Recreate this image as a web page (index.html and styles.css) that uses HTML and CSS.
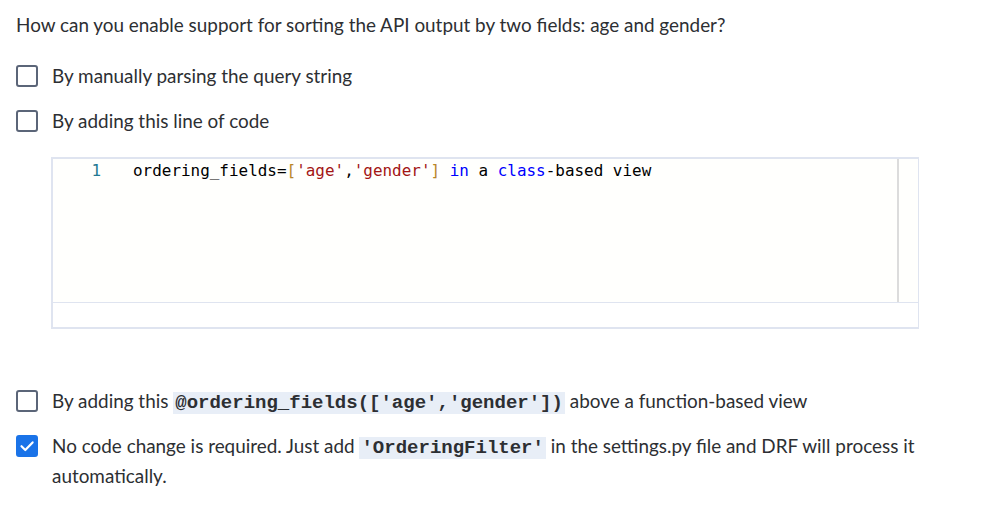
FILE: index.html
```html
<!DOCTYPE html>
<html lang="en">
<head>
<meta charset="utf-8">
<title>Quiz</title>
<link rel="stylesheet" href="styles.css">
</head>
<body>
<div class="quiz">
  <p class="question">How can you enable support for sorting the API output by two fields: age and gender?</p>
  <ul class="options">
    <li class="option">
      <span class="box"></span>
      <span class="label">By manually parsing the query string</span>
    </li>
    <li class="option option-code">
      <div class="row">
        <span class="box"></span>
        <span class="label">By adding this line of code</span>
      </div>
      <div class="editor">
        <div class="editor-main">
          <div class="code-area">
            <div class="code-line"><span class="ln">1</span><span class="src">ordering_fields=<span class="br">[</span><span class="str">'age'</span>,<span class="str">'gender'</span><span class="br">]</span> <span class="kw">in</span> a <span class="kw">class</span>-based view</span></div>
          </div>
          <div class="vscroll"></div>
        </div>
        <div class="editor-foot"></div>
      </div>
    </li>
    <li class="option">
      <span class="box"></span>
      <span class="label">By adding this <code class="inline">@ordering_fields(['age','gender'])</code> above a function-based view</span>
    </li>
    <li class="option">
      <span class="box checked"><svg viewBox="0 0 22 22" width="22" height="22"><path d="M5.5 11.2 L9.3 15 L16.6 7.4" fill="none" stroke="#fff" stroke-width="2.2" stroke-linecap="round" stroke-linejoin="round"/></svg></span>
      <span class="label">No code change is required. Just add <code class="inline">'OrderingFilter'</code> in the settings.py file and DRF will process it automatically.</span>
    </li>
  </ul>
</div>
</body>
</html>
```

FILE: styles.css
```css
html, body {
  margin: 0;
  padding: 0;
  background: #ffffff;
}
body {
  font-family: Lato, "Noto Sans", sans-serif;
  font-size: 18.9px;
  line-height: 30px;
  color: #2d2f33;
}
.quiz {
  padding: 10px 16px 0 16px;
  width: 904px;
}
.question {
  margin: 0 0 21px 0;
}
.options {
  list-style: none;
  margin: 0;
  padding: 0;
  display: flex;
  flex-direction: column;
  gap: 15px;
}
.option, .row {
  display: flex;
  align-items: flex-start;
}
.option-code {
  display: block;
}
.box {
  flex: none;
  width: 18px;
  height: 18px;
  border: 2px solid #5b6578;
  border-radius: 3px;
  margin-top: 4px;
  margin-right: 14px;
  box-sizing: content-box;
  position: relative;
}
.box.checked {
  background: #1a73e8;
  border-color: #1a73e8;
}
.box.checked svg {
  position: absolute;
  left: -2px;
  top: -2px;
}
.label {
  flex: 1;
}
.editor {
  margin: 21px 0 42px 35px;
  border: 2px solid #dfe4f0;
  border-right-width: 1px;
  width: 865px;
}
.editor-main {
  display: flex;
  height: 143px;
  background: #fffffd;
  border-bottom: 1px solid #dfe4f0;
}
.code-area {
  flex: 1;
  padding-top: 2px;
}
.vscroll {
  width: 19px;
  border-left: 2px solid #dcdcdc;
}
.editor-foot {
  height: 24px;
  background: #fff;
}
.code-line {
  display: flex;
  font-family: "DejaVu Sans Mono", "Liberation Mono", monospace;
  font-size: 15.95px;
  line-height: 19px;
  color: #000;
  white-space: pre;
}
.ln {
  width: 48px;
  text-align: right;
  color: #237893;
  margin-right: 32px;
}
.str { color: #a31515; }
.kw { color: #0000ff; }
.br { color: #b8862b; }
code.inline {
  font-family: "Liberation Mono", "Courier New", monospace;
  font-weight: bold;
  font-size: 19px;
  line-height: 20px;
  background: #e8eef7;
  color: #2d2f33;
  padding: 0 2px;
}
```
